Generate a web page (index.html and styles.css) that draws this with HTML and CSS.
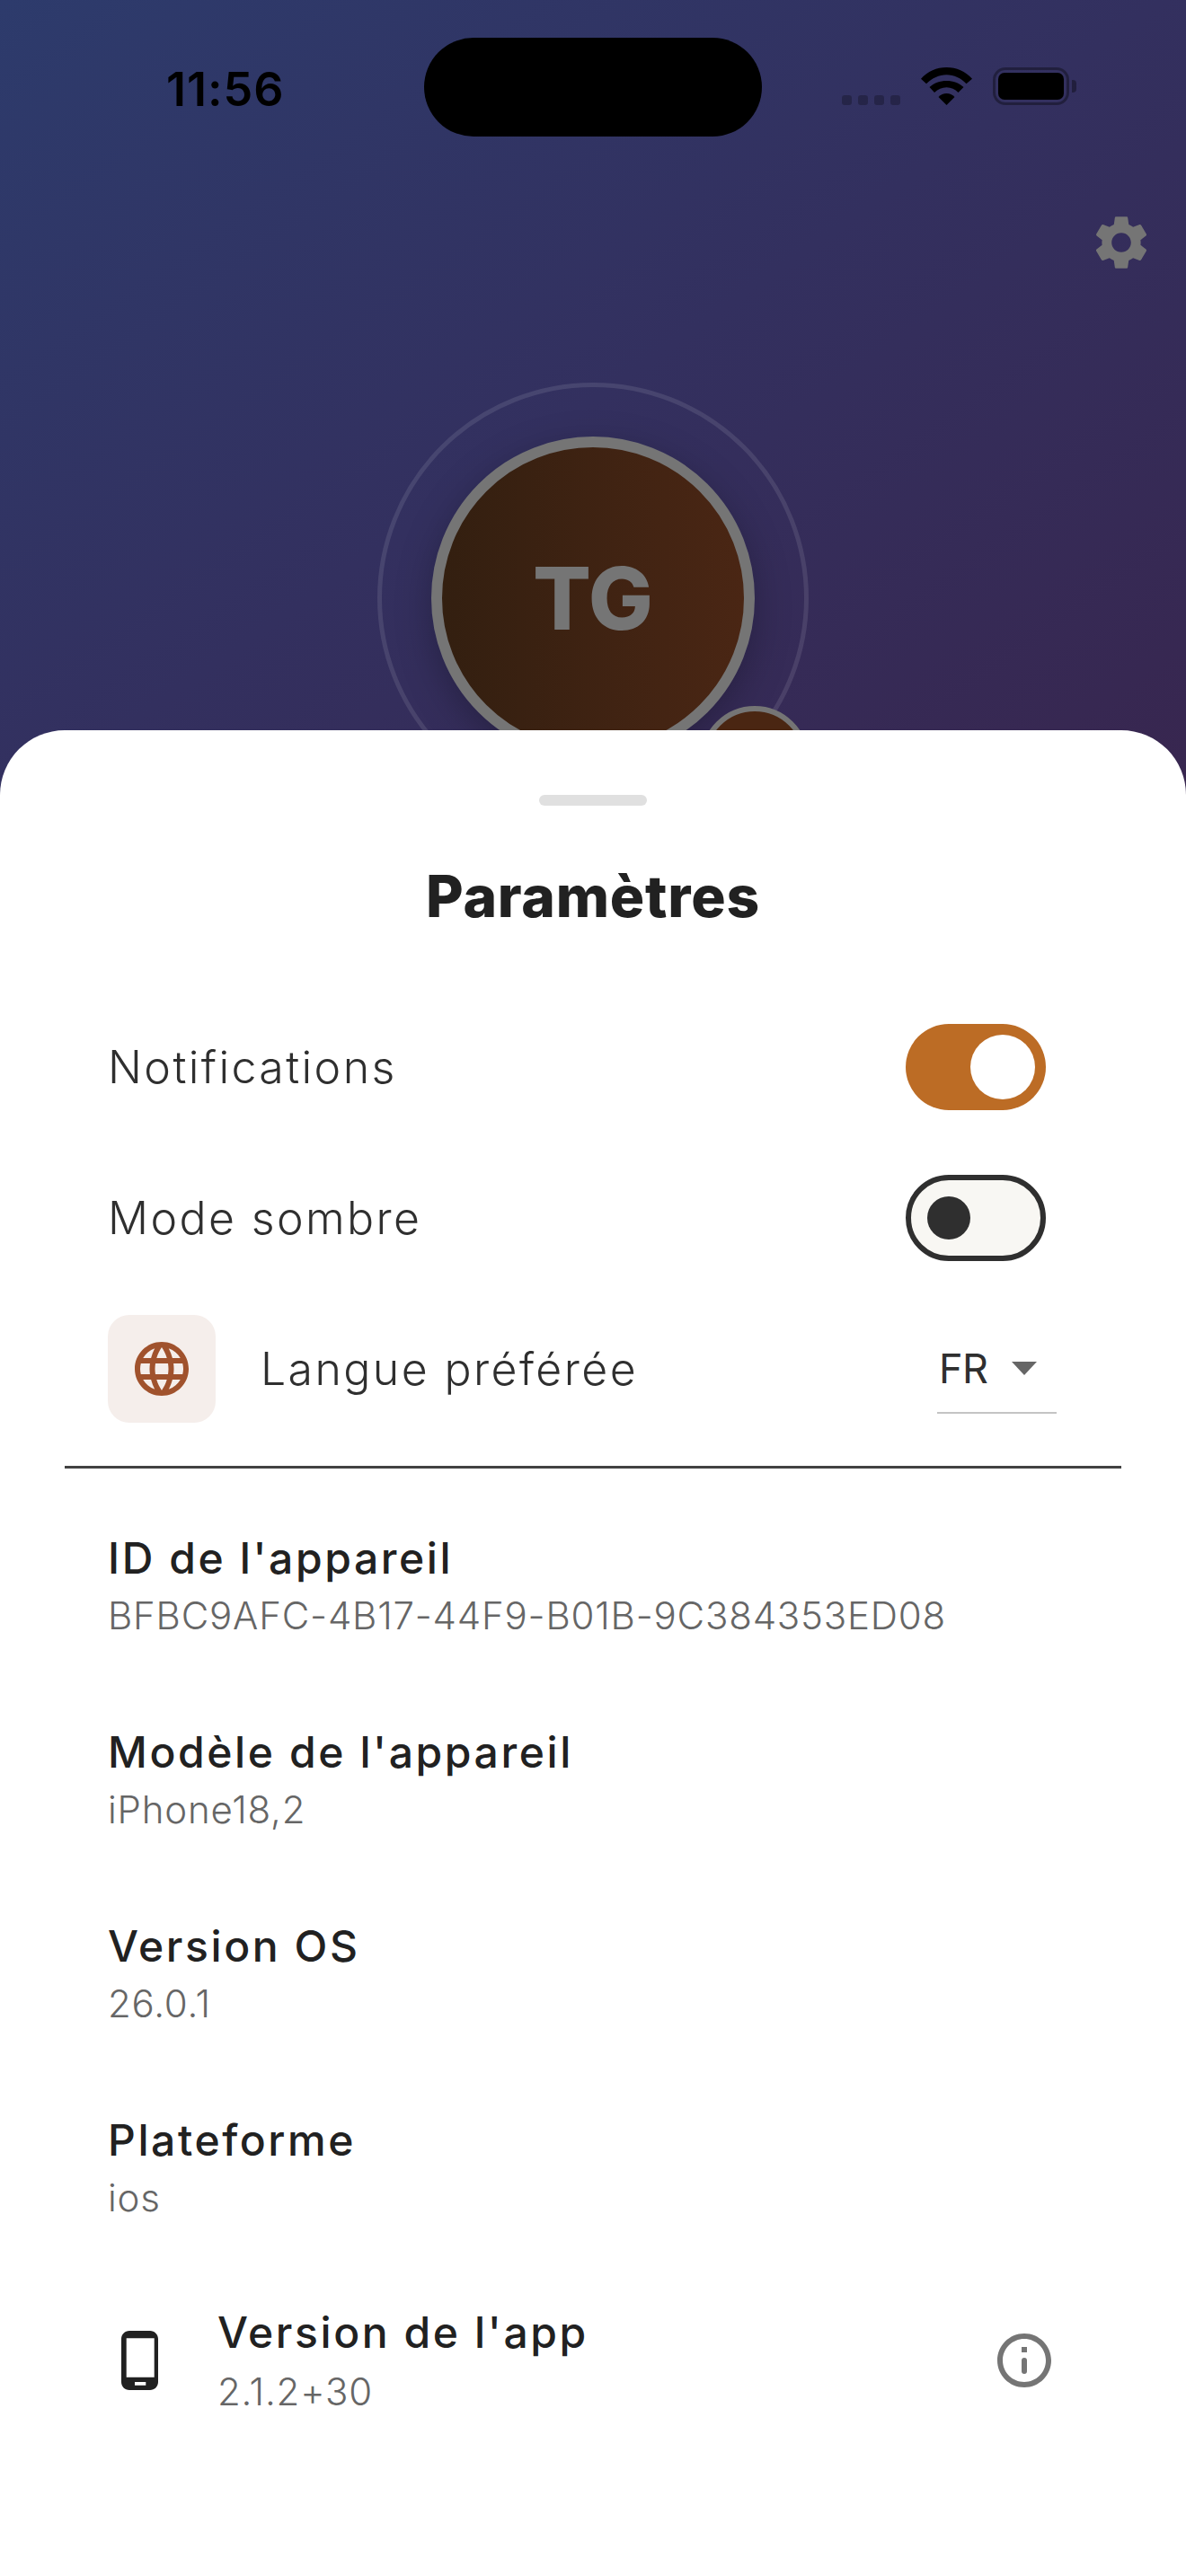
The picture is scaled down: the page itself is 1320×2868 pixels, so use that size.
FILE: index.html
```html
<!DOCTYPE html>
<html lang="fr">
  <head>
    <meta charset="utf-8">
    <title>Paramètres</title>
    <link rel="stylesheet" href="styles.css">
  </head>
  <body>
    <div class="hero">
      <div class="status-bar">
        <div class="status-time">11:56</div>
        <div class="island"></div>
        <div class="status-icons">
          <div class="signal"><span></span><span></span><span></span><span></span></div>
          <svg class="wifi" width="57" height="42" viewBox="0 0 57 42">
            <path d="M0 12.7C7.5 4.5 17.5 0 28.5 0S49.500 4.500 57 12.700L50.500 18.300C44.500 12 37 8.300 28.500 8.300S12.500 12 6 18.300Z"/>
            <path d="M9.500 22C14.500 17.500 21 15 28.500 15S42.500 17.500 47.500 22L41.500 28C38 24.500 33.500 22.300 28.500 22.300S19 24.500 15 28Z"/>
            <path d="M19.500 33C22 30.500 25 29 28.500 29S35 30.500 37.500 33L28.500 42Z"/>
          </svg>
          <div class="battery"><div class="battery-level"></div></div>
          <div class="battery-nub"></div>
        </div>
      </div>

      <div class="hero-actions">
        <svg class="gear" width="72" height="72" viewBox="0 0 24 24">
          <path d="M19.14 12.94c.04-.3.06-.61.06-.94 0-.32-.02-.64-.07-.94l2.03-1.58c.18-.14.23-.41.12-.61l-1.92-3.32c-.12-.22-.37-.29-.59-.22l-2.39.96c-.5-.38-1.03-.7-1.62-.94l-.36-2.54c-.04-.24-.24-.41-.48-.41h-3.84c-.24 0-.43.17-.47.41l-.36 2.54c-.59.24-1.13.57-1.62.94l-2.39-.96c-.22-.08-.47 0-.59.22L2.74 8.87c-.12.21-.08.47.12.61l2.03 1.58c-.05.3-.09.63-.09.94s.02.64.07.94l-2.03 1.58c-.18.14-.23.41-.12.61l1.92 3.32c.12.22.37.29.59.22l2.39-.96c.5.38 1.03.7 1.62.94l.36 2.54c.05.24.24.41.48.41h3.84c.24 0 .44-.17.47-.41l.36-2.54c.59-.24 1.13-.56 1.62-.94l2.39.96c.22.08.47 0 .59-.22l1.92-3.32c.12-.22.07-.47-.12-.61l-2.01-1.58zM12 15.6c-1.98 0-3.6-1.62-3.6-3.6s1.62-3.6 3.6-3.6 3.6 1.62 3.6 3.6-1.62 3.6-3.6 3.6z"/>
        </svg>
      </div>

      <div class="avatar-ring">
        <div class="avatar">TG</div>
        <div class="avatar-badge"></div>
      </div>
    </div>

    <div class="sheet">
      <div class="handle"></div>
      <div class="sheet-title">Paramètres</div>

      <div class="setting-row">
        <div class="setting-label">Notifications</div>
        <div class="switch switch-on"><div class="thumb"></div></div>
      </div>
      <div class="setting-row">
        <div class="setting-label">Mode sombre</div>
        <div class="switch switch-off"><div class="thumb"></div></div>
      </div>
      <div class="setting-row">
        <div class="lang-icon">
          <svg width="72" height="72" viewBox="0 0 24 24">
            <path d="M11.99 2C6.47 2 2 6.48 2 12s4.47 10 9.99 10C17.52 22 22 17.52 22 12S17.52 2 11.99 2zm6.93 6h-2.95c-.32-1.25-.78-2.45-1.38-3.56 1.84.63 3.37 1.91 4.33 3.56zM12 4.04c.83 1.2 1.48 2.53 1.91 3.96h-3.82c.43-1.43 1.08-2.76 1.91-3.96zM4.26 14C4.1 13.36 4 12.69 4 12s.1-1.36.26-2h3.38c-.08.66-.14 1.32-.14 2 0 .68.06 1.34.14 2H4.26zm.82 2h2.95c.32 1.25.78 2.45 1.38 3.56-1.84-.63-3.37-1.9-4.33-3.56zm2.95-8H5.08c.96-1.66 2.49-2.93 4.33-3.56C8.81 5.55 8.35 6.75 8.03 8zM12 19.96c-.83-1.2-1.48-2.53-1.91-3.96h3.82c-.43 1.43-1.08 2.76-1.91 3.96zM14.34 14H9.66c-.09-.66-.16-1.32-.16-2 0-.68.07-1.35.16-2h4.68c.09.65.16 1.32.16 2 0 .68-.07 1.34-.16 2zm.25 5.56c.6-1.11 1.06-2.31 1.38-3.56h2.95c-.96 1.65-2.49 2.93-4.33 3.56zM16.36 14c.08-.66.14-1.32.14-2 0-.68-.06-1.34-.14-2h3.38c.16.64.26 1.31.26 2s-.1 1.36-.26 2h-3.38z"/>
          </svg>
        </div>
        <div class="setting-label lang-label">Langue préférée</div>
        <div class="lang-select">
          <span class="lang-value">FR</span>
          <span class="lang-arrow"></span>
        </div>
      </div>

      <div class="divider"></div>

      <div class="info-row">
        <div class="info-title">ID de l'appareil</div>
        <div class="info-value">BFBC9AFC-4B17-44F9-B01B-9C384353ED08</div>
      </div>
      <div class="info-row">
        <div class="info-title">Modèle de l'appareil</div>
        <div class="info-value">iPhone18,2</div>
      </div>
      <div class="info-row">
        <div class="info-title">Version OS</div>
        <div class="info-value">26.0.1</div>
      </div>
      <div class="info-row">
        <div class="info-title">Plateforme</div>
        <div class="info-value">ios</div>
      </div>

      <div class="app-row">
        <svg class="phone" width="41" height="66" viewBox="0 0 41 66">
          <path fill-rule="evenodd" d="M9 0H32C37 0 41 4 41 9V57C41 62 37 66 32 66H9C4 66 0 62 0 57V9C0 4 4 0 9 0ZM5.700 8.300V51.700H36.700V8.300ZM15 57V60.700H27.300V57Z"/>
        </svg>
        <div class="app-text">
          <div class="info-title">Version de l'app</div>
          <div class="info-value">2.1.2+30</div>
        </div>
        <svg class="info-icon" width="72" height="72" viewBox="0 0 24 24">
          <path d="M12 2C6.48 2 2 6.48 2 12s4.48 10 10 10 10-4.48 10-10S17.520 2 12 2zm0 18c-4.410 0-8-3.590-8-8s3.590-8 8-8 8 3.590 8 8-3.590 8-8 8z"/>
          <rect x="11" y="7" width="2" height="2"/>
          <rect x="11" y="11" width="2" height="6" rx="1"/>
        </svg>
      </div>
    </div>
  </body>
</html>
```

FILE: styles.css
```css
body {
  margin: 0;
  padding: 0;
  background-color: #fff;
  font-family: Inter, "Liberation Sans", sans-serif;
  color: #212121;
}
.hero {
  height: 890px;
  overflow: hidden;
  background: linear-gradient(145deg, #2d3b6c 0%, #33305f 50%, #38264f 100%);
}
.status-bar {
  display: flex;
  align-items: flex-start;
  height: 152px;
  padding: 42px 0 0 185px;
  box-sizing: border-box;
}
.status-time {
  width: 287px;
  margin-top: 27px;
  font-size: 52px;
  line-height: 62px;
  font-weight: 600;
  letter-spacing: 1px;
  color: #000;
}
.island {
  width: 376px;
  height: 110px;
  border-radius: 55px;
  background-color: #000;
}
.status-icons {
  display: flex;
  align-items: flex-start;
  margin: 33px 0 0 89px;
}
.signal {
  display: flex;
  gap: 7px;
  margin: 31px 23px 0 0;
}
.signal span {
  width: 11px;
  height: 11px;
  border-radius: 3px;
  background-color: rgba(0, 0, 0, 0.25);
}
.wifi {
  display: block;
  margin-right: 23px;
}
.battery {
  width: 85px;
  height: 42px;
  padding: 3px;
  box-sizing: border-box;
  border: 3.5px solid rgba(0, 0, 0, 0.35);
  border-radius: 14px;
}
.battery-level {
  height: 100%;
  border-radius: 7px;
  background-color: #000;
}
.battery-nub {
  width: 5px;
  height: 14px;
  margin: 14px 0 0 3px;
  border-radius: 0 4px 4px 0;
  background-color: rgba(0, 0, 0, 0.35);
}
.hero-actions {
  display: flex;
  justify-content: flex-end;
  padding: 82px 36px 0 0;
}
.gear {
  display: block;
  fill: #757575;
}
.avatar-ring {
  position: relative;
  display: flex;
  align-items: center;
  justify-content: center;
  width: 480px;
  height: 480px;
  margin: 120px auto 0;
  box-sizing: border-box;
  border: 5px solid rgba(255, 255, 255, 0.1);
  border-radius: 50%;
}
.avatar {
  display: flex;
  align-items: center;
  justify-content: center;
  width: 360px;
  height: 360px;
  box-sizing: border-box;
  border: 12px solid #757575;
  border-radius: 50%;
  background: linear-gradient(90deg, #331f10, #4a2614);
  box-shadow: 0 12px 40px rgba(0, 0, 0, 0.25);
  font-size: 96px;
  font-weight: 800;
  color: #757575;
}
.avatar-badge {
  position: absolute;
  left: 355px;
  top: 355px;
  width: 120px;
  height: 120px;
  box-sizing: border-box;
  border: 6px solid #757575;
  border-radius: 50%;
  background-color: #4a2612;
}
.sheet {
  position: relative;
  height: 2055px;
  margin-top: -77px;
  padding-top: 72px;
  box-sizing: border-box;
  border-radius: 72px 72px 0 0;
  background-color: #fff;
}
.handle {
  width: 120px;
  height: 12px;
  margin: 0 auto;
  border-radius: 6px;
  background-color: #e0e0e0;
}
.sheet-title {
  margin: 61px 0 66px;
  font-size: 64px;
  line-height: 80px;
  font-weight: 800;
  letter-spacing: 0.8px;
  text-align: center;
  color: #212121;
}
.setting-row {
  display: flex;
  align-items: center;
  justify-content: space-between;
  height: 168px;
  padding: 0 156px 0 120px;
}
.setting-label {
  font-size: 50px;
  font-weight: 300;
  letter-spacing: 2.4px;
  color: #2f2f2f;
}
.switch {
  width: 156px;
  height: 96px;
  box-sizing: border-box;
  border-radius: 48px;
  display: flex;
  align-items: center;
}
.switch-on {
  justify-content: flex-end;
  padding: 0 12px;
  background-color: #bc6c25;
}
.switch-on .thumb {
  width: 72px;
  height: 72px;
  border-radius: 50%;
  background-color: #fff;
}
.switch-off {
  padding: 0 18px;
  border: 6px solid #2f2f2f;
  background-color: #f8f7f3;
}
.switch-off .thumb {
  width: 48px;
  height: 48px;
  border-radius: 50%;
  background-color: #2f2f2f;
}
.lang-icon {
  display: flex;
  align-items: center;
  justify-content: center;
  width: 120px;
  height: 120px;
  border-radius: 24px;
  background-color: #f5eeeb;
  fill: #a0522d;
}
.lang-label {
  flex: 1;
  margin-left: 50px;
}
.lang-select {
  display: flex;
  align-items: center;
  width: 133px;
  height: 100px;
  margin: 0 -12px 0 0;
  box-sizing: border-box;
  padding: 0 22px 0 2px;
  border-bottom: 2px solid #c4c4c4;
}
.lang-value {
  font-size: 45px;
  font-weight: 400;
  letter-spacing: -0.5px;
  color: #2f2f2f;
}
.lang-arrow {
  width: 0;
  height: 0;
  margin-left: auto;
  border-left: 14px solid transparent;
  border-right: 14px solid transparent;
  border-top: 15px solid #666;
}
.divider {
  height: 3px;
  margin: 24px 72px 23px;
  background-color: #424242;
}
.info-row {
  display: flex;
  flex-direction: column;
  justify-content: center;
  height: 216px;
  padding-left: 120px;
}
.info-row .info-title {
  padding-top: 2px;
  margin-bottom: -2px;
}
.info-title {
  font-size: 48px;
  line-height: 66px;
  font-weight: 500;
  letter-spacing: 2.6px;
  color: #212121;
}
.info-value {
  font-size: 42px;
  line-height: 66px;
  font-weight: 300;
  letter-spacing: 0.8px;
  color: #666;
}
.app-row {
  display: flex;
  align-items: center;
  height: 212px;
  padding: 0 144px 0 135px;
}
.phone {
  display: block;
  fill: #212121;
}
.app-text {
  flex: 1;
  margin: 4px 0 0 66px;
}
.info-icon {
  display: block;
  fill: #757575;
}
```
